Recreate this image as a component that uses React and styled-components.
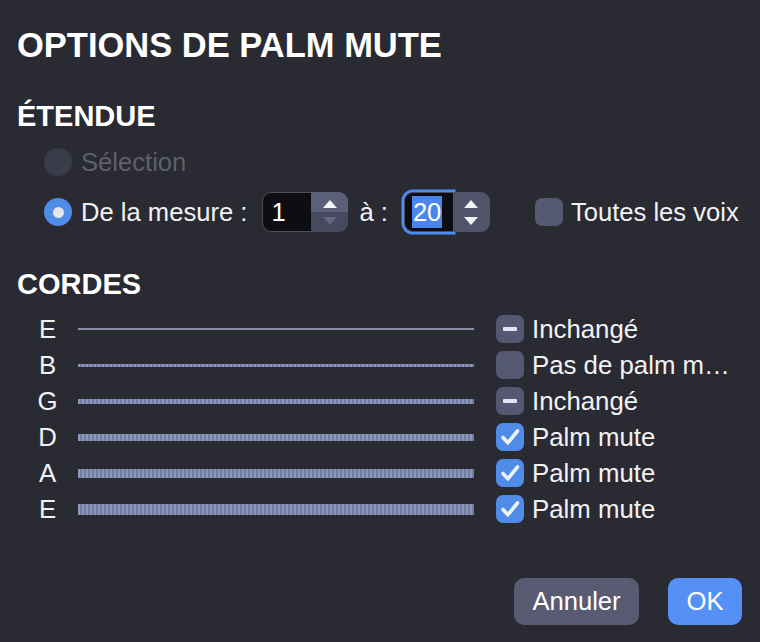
import React from "react";
import styled, { createGlobalStyle } from "styled-components";

const GlobalStyle = createGlobalStyle`
  html, body {
    margin: 0;
    padding: 0;
    background: #2a2a33;
  }
  body {
    font-family: "Liberation Sans", Arial, sans-serif;
    color: #f2f2f5;
  }
`;

const Dialog = styled.div`
  width: 760px;
  height: 642px;
  box-sizing: border-box;
  padding: 25px 18px 17px 17px;
  display: flex;
  flex-direction: column;
  background: #2a2a33;
`;

const Title = styled.h1`
  margin: 0;
  font-size: 34.5px;
  line-height: 40px;
  font-weight: 700;
  color: #fff;
`;

const SectionTitle = styled.h2`
  margin: ${(p) => p.$top}px 0 0;
  font-size: 29px;
  line-height: 40px;
  font-weight: 700;
  color: #fff;
`;

const OptionRow = styled.div`
  display: flex;
  align-items: center;
  height: ${(p) => p.$h}px;
  margin-top: ${(p) => p.$top}px;
  padding-left: 27px;
  font-size: 25.6px;
`;

const Radio = styled.span`
  width: 28px;
  height: 28px;
  border-radius: 50%;
  flex: none;
  display: flex;
  align-items: center;
  justify-content: center;
  background: ${(p) => (p.$checked ? "#4f8ce8" : "#3a3c49")};
  &::after {
    content: "";
    width: 11px;
    height: 11px;
    border-radius: 50%;
    background: #e4e7ee;
    display: ${(p) => (p.$checked ? "block" : "none")};
  }
`;

const Label = styled.span`
  margin-left: ${(p) => p.$gap ?? 9}px;
  color: ${(p) => (p.$disabled ? "#5e606e" : "#f2f2f5")};
  white-space: nowrap;
`;

const Spinner = styled.div`
  display: flex;
  width: 86px;
  height: 40px;
  margin-left: ${(p) => p.$left}px;
  border-radius: 9px;
  flex: none;
`;

const Field = styled.div`
  width: 49px;
  box-sizing: border-box;
  background: #0e0e12;
  border: 1.5px solid #4c4f62;
  border-right: none;
  border-radius: 9px 0 0 9px;
  display: flex;
  align-items: center;
  padding-left: ${(p) => (p.$focused ? 7 : 8)}px;
  font-size: 25.6px;
  color: #fff;
  box-shadow: ${(p) => (p.$focused ? "0 0 0 2.5px #4d8df2" : "none")};
`;

const Selected = styled.span`
  background: #4a86ee;
  color: #fff;
  line-height: 32px;
  padding: 0 1px;
`;

const Stepper = styled.div`
  width: 37px;
  display: flex;
  flex-direction: column;
  border-radius: 0 9px 9px 0;
  overflow: hidden;
`;

const StepHalf = styled.div`
  flex: 1;
  display: flex;
  align-items: center;
  justify-content: center;
  background: ${(p) => p.$bg};
  padding-${(p) => (p.$up ? "top" : "bottom")}: 3px;
`;

const Box = styled.span`
  width: 28px;
  height: 28px;
  border-radius: 7px;
  flex: none;
  display: flex;
  align-items: center;
  justify-content: center;
  background: ${(p) => (p.$state === "on" ? "#4f8ce8" : "#545872")};
  margin-left: ${(p) => p.$left ?? 0}px;
`;

const Dash = styled.span`
  width: 14px;
  height: 4px;
  border-radius: 1px;
  background: #e2e6f2;
`;

const Strings = styled.div`
  margin-top: 7px;
  display: flex;
  flex-direction: column;
`;

const StringRow = styled.div`
  display: flex;
  align-items: center;
  height: 36px;
  font-size: 25.8px;
`;

const Note = styled.span`
  width: 61px;
  text-align: center;
  flex: none;
  color: #f2f2f5;
`;

const StringLine = styled.div`
  width: 396px;
  height: ${(p) => p.$thick}px;
  margin-right: 22px;
  flex: none;
  background: ${(p) =>
    p.$wound
      ? "repeating-linear-gradient(90deg, #8c97bc 0 2px, #737da2 2px 4px)"
      : "#8a90a8"};
`;

const Footer = styled.div`
  margin-top: auto;
  display: flex;
  justify-content: flex-end;
  gap: 29px;
`;

const Button = styled.button`
  height: 47px;
  min-width: ${(p) => p.$w}px;
  border: none;
  border-radius: 10px;
  font-family: "Liberation Sans", Arial, sans-serif;
  font-size: 25.6px;
  color: #fff;
  background: ${(p) => (p.$primary ? "#5590f6" : "#585b72")};
  padding: 0 16px;
`;

const Arrow = ({ up, color }) => (
  <svg width="14" height="8" viewBox="0 0 14 8">
    <path d={up ? "M0 8 L7 0 L14 8Z" : "M0 0 L7 8 L14 0Z"} fill={color} />
  </svg>
);

const Check = () => (
  <svg width="28" height="28" viewBox="0 0 28 28">
    <path
      d="M7 14.5 L11.8 19.8 L21.5 8"
      fill="none"
      stroke="#eef2fb"
      strokeWidth="3.6"
      strokeLinecap="round"
      strokeLinejoin="round"
    />
  </svg>
);

const CheckBox = ({ state, left }) => (
  <Box $state={state} $left={left}>
    {state === "mixed" && <Dash />}
    {state === "on" && <Check />}
  </Box>
);

const strings = [
  { note: "E", thick: 2, wound: false, state: "mixed", label: "Inchangé" },
  { note: "B", thick: 3, wound: true, state: "off", label: "Pas de palm m…" },
  { note: "G", thick: 5, wound: true, state: "mixed", label: "Inchangé" },
  { note: "D", thick: 7, wound: true, state: "on", label: "Palm mute" },
  { note: "A", thick: 9, wound: true, state: "on", label: "Palm mute" },
  { note: "E", thick: 11, wound: true, state: "on", label: "Palm mute" },
];

export default function App() {
  return (
    <>
      <GlobalStyle />
      <Dialog>
        <Title>OPTIONS DE PALM MUTE</Title>

        <SectionTitle $top={31}>ÉTENDUE</SectionTitle>
        <OptionRow $h={36} $top={8}>
          <Radio />
          <Label $disabled>Sélection</Label>
        </OptionRow>
        <OptionRow $h={44} $top={10}>
          <Radio $checked />
          <Label>De la mesure :</Label>
          <Spinner $left={15}>
            <Field>1</Field>
            <Stepper>
              <StepHalf $up $bg="#5c5f78">
                <Arrow up color="#f4f5f8" />
              </StepHalf>
              <StepHalf $bg="#474a5e">
                <Arrow color="#626680" />
              </StepHalf>
            </Stepper>
          </Spinner>
          <Label $gap={11}>à :</Label>
          <Spinner $left={16}>
            <Field $focused>
              <Selected>20</Selected>
            </Field>
            <Stepper>
              <StepHalf $up $bg="#505369">
                <Arrow up color="#f4f5f8" />
              </StepHalf>
              <StepHalf $bg="#505369">
                <Arrow color="#f4f5f8" />
              </StepHalf>
            </Stepper>
          </Spinner>
          <CheckBox state="off" left={45} />
          <Label $gap={8}>Toutes les voix</Label>
        </OptionRow>

        <SectionTitle $top={30}>CORDES</SectionTitle>
        <Strings>
          {strings.map((s, i) => (
            <StringRow key={i}>
              <Note>{s.note}</Note>
              <StringLine $thick={s.thick} $wound={s.wound} />
              <CheckBox state={s.state} />
              <Label $gap={8}>{s.label}</Label>
            </StringRow>
          ))}
        </Strings>

        <Footer>
          <Button $w={125}>Annuler</Button>
          <Button $w={74} $primary>
            OK
          </Button>
        </Footer>
      </Dialog>
    </>
  );
}
